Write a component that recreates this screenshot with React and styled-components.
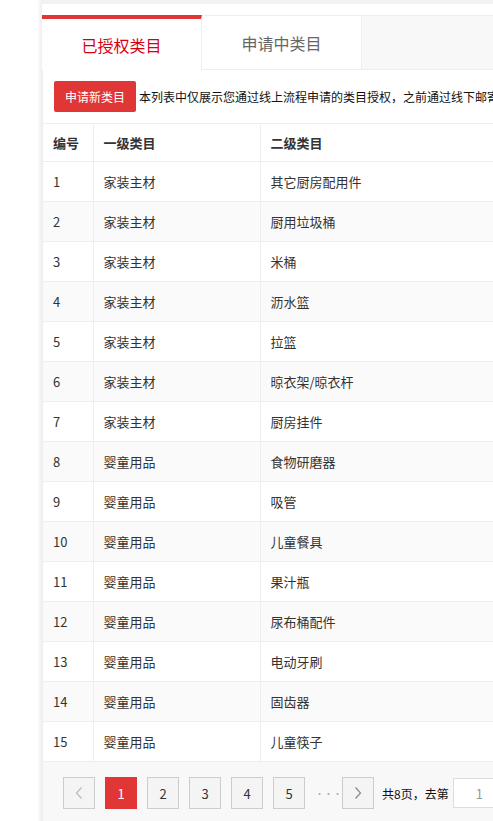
import React from "react";
import styled, { createGlobalStyle } from "styled-components";

const GlobalStyle = createGlobalStyle`
  html, body {
    margin: 0;
    padding: 0;
    background: #fff;
    overflow: hidden;
  }
  body {
    font-family: "Noto Sans CJK SC", "Noto Sans", Arial, sans-serif;
    font-size: 13px;
    color: #333;
  }
`;

const Page = styled.div`
  margin-left: 41px;
  width: 900px;
  min-height: 821px;
  box-shadow: -2px 0 3px rgba(0, 0, 0, 0.06);
  border-left: 1px solid #f0f0f0;
`;

const TopStrip = styled.div`
  height: 4px;
  background: #f2f2f2;
`;

const TabBar = styled.div`
  display: flex;
  margin-top: 11px;
  height: 55px;
`;

const Tab = styled.div`
  width: 160px;
  flex: none;
  display: flex;
  align-items: center;
  justify-content: center;
  font-size: 16px;
  box-sizing: border-box;
  background: #fff;
  color: ${(p) => (p.$active ? "#d7000f" : "#666")};
  border-top: ${(p) => (p.$active ? "4px solid #e03636" : "1px solid #eee")};
  border-right: 1px solid #eee;
  border-bottom: ${(p) => (p.$active ? "none" : "1px solid #eee")};
`;

const TabFill = styled.div`
  flex: 1;
  background: #f8f8f8;
  border-top: 1px solid #eee;
  border-bottom: 1px solid #eee;
`;

const Panel = styled.div`
  border-left: 1px solid #eee;
`;

const Toolbar = styled.div`
  display: flex;
  align-items: center;
  gap: 3px;
  padding: 11px 10px 11px 11px;
`;

const ApplyButton = styled.button`
  height: 31px;
  width: 82px;
  border: none;
  border-radius: 2px;
  background: #e03636;
  color: #fff;
  font-family: inherit;
  font-size: 12px;
  padding: 0;
  cursor: pointer;
`;

const Notice = styled.span`
  color: #111;
  font-size: 12px;
  white-space: nowrap;
`;

const Table = styled.table`
  border-collapse: collapse;
  width: 100%;
  table-layout: fixed;
  border-top: 1px solid #eee;
`;

const HeadCell = styled.th`
  height: 38px;
  padding: 0 0 0 10px;
  text-align: left;
  font-weight: bold;
  color: #333;
  border-right: 1px solid #eee;
  border-bottom: 1px solid #eee;
  box-sizing: border-box;
`;

const Row = styled.tr`
  background: ${(p) => (p.$odd ? "#fafafa" : "#fff")};
`;

const Cell = styled.td`
  height: 40px;
  padding: 0 0 0 10px;
  color: #333;
  border-right: 1px solid #eee;
  border-bottom: 1px solid #eee;
  box-sizing: border-box;
  white-space: nowrap;
`;

const Pager = styled.div`
  background: #f8f8f8;
  display: flex;
  align-items: center;
  gap: 10px;
  padding: 15px 20px 30px 20px;
`;

const PageBtn = styled.div`
  width: 32px;
  height: 32px;
  box-sizing: border-box;
  display: flex;
  align-items: center;
  justify-content: center;
  font-size: 13px;
  background: ${(p) => (p.$active ? "#e03636" : "#f4f4f4")};
  color: ${(p) => (p.$active ? "#fff" : "#333")};
  border: 1px solid ${(p) => (p.$active ? "#e03636" : "#ccc")};
`;

const Dots = styled.span`
  width: 17px;
  text-align: center;
  color: #aaa;
  font-size: 9px;
  white-space: nowrap;
`;

const Total = styled.span`
  color: #111;
  font-size: 12px;
  margin-left: -2px;
  white-space: nowrap;
`;

const JumpInput = styled.input`
  width: 80px;
  height: 30px;
  box-sizing: border-box;
  border: 1px solid #ddd;
  background: #fff;
  text-align: left;
  padding-left: 22px;
  color: #999;
  font-size: 13px;
  font-family: inherit;
  margin-left: -6px;
`;

const Chevron = ({ dir, color }) => (
  <svg width="10" height="14" viewBox="0 0 10 14">
    <path
      d={dir === "left" ? "M7.5 1.5 L2.5 7 L7.5 12.5" : "M2.5 1.5 L7.5 7 L2.5 12.5"}
      fill="none"
      stroke={color}
      strokeWidth="1.2"
    />
  </svg>
);

const rows = [
  ["家装主材", "其它厨房配用件"],
  ["家装主材", "厨用垃圾桶"],
  ["家装主材", "米桶"],
  ["家装主材", "沥水篮"],
  ["家装主材", "拉篮"],
  ["家装主材", "晾衣架/晾衣杆"],
  ["家装主材", "厨房挂件"],
  ["婴童用品", "食物研磨器"],
  ["婴童用品", "吸管"],
  ["婴童用品", "儿童餐具"],
  ["婴童用品", "果汁瓶"],
  ["婴童用品", "尿布桶配件"],
  ["婴童用品", "电动牙刷"],
  ["婴童用品", "固齿器"],
  ["婴童用品", "儿童筷子"],
];

export default function App() {
  return (
    <>
      <GlobalStyle />
      <Page>
        <TopStrip />
        <TabBar>
          <Tab $active>已授权类目</Tab>
          <Tab>申请中类目</Tab>
          <TabFill />
        </TabBar>
        <Panel>
          <Toolbar>
            <ApplyButton>申请新类目</ApplyButton>
            <Notice>
              本列表中仅展示您通过线上流程申请的类目授权，之前通过线下邮寄申请的类目授权不在此列表中展示
            </Notice>
          </Toolbar>
          <Table>
            <colgroup>
              <col style={{ width: 50 }} />
              <col style={{ width: 167 }} />
              <col />
            </colgroup>
            <thead>
              <tr>
                <HeadCell>编号</HeadCell>
                <HeadCell>一级类目</HeadCell>
                <HeadCell>二级类目</HeadCell>
              </tr>
            </thead>
            <tbody>
              {rows.map((r, i) => (
                <Row key={i} $odd={i % 2 === 1}>
                  <Cell>{i + 1}</Cell>
                  <Cell>{r[0]}</Cell>
                  <Cell>{r[1]}</Cell>
                </Row>
              ))}
            </tbody>
          </Table>
          <Pager>
            <PageBtn>
              <Chevron dir="left" color="#bbb" />
            </PageBtn>
            <PageBtn $active>1</PageBtn>
            <PageBtn>2</PageBtn>
            <PageBtn>3</PageBtn>
            <PageBtn>4</PageBtn>
            <PageBtn>5</PageBtn>
            <Dots>···</Dots>
            <PageBtn>
              <Chevron dir="right" color="#888" />
            </PageBtn>
            <Total>共8页，去第</Total>
            <JumpInput defaultValue="1" />
          </Pager>
        </Panel>
      </Page>
    </>
  );
}
